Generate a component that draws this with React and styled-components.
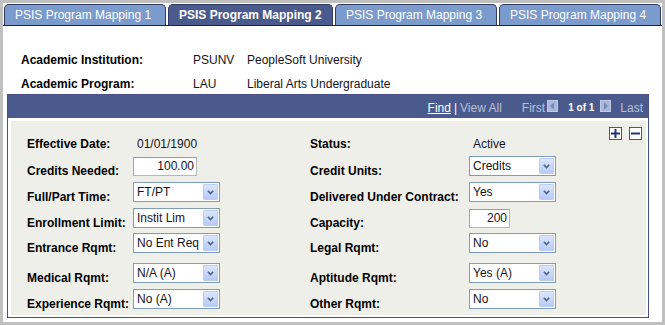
import React from 'react';
import styled, { createGlobalStyle } from 'styled-components';

const GlobalStyle = createGlobalStyle`
  body {
    margin: 0;
    font-family: 'Liberation Sans', Arial, sans-serif;
    font-size: 12px;
    color: #000;
  }
`;

const Frame = styled.div`
  width: 665px;
  height: 325px;
  box-sizing: border-box;
  border: 3px solid #c0c0c0;
  background: #fff;
  overflow: hidden;
`;

const TabBar = styled.div`
  display: flex;
  gap: 2px;
  margin-top: 1px;
  padding-left: 1px;
  border-bottom: 1px solid #1c2340;
`;

const Tab = styled.div`
  box-sizing: border-box;
  width: ${(p) => p.$w}px;
  height: 21px;
  padding-left: 10px;
  line-height: 20px;
  border: 1px solid #2e3a66;
  border-bottom: none;
  border-radius: 5px 5px 0 0;
  background: ${(p) => (p.$active ? '#4b5a8c' : '#7b9bcd')};
  color: #fff;
  font-weight: ${(p) => (p.$active ? 'bold' : 'normal')};
  white-space: nowrap;
`;

const InfoGrid = styled.div`
  display: grid;
  grid-template-columns: 172px 54px 1fr;
  row-gap: 10px;
  margin-top: 27px;
  padding-left: 18px;
  line-height: 14px;
`;

const InfoLabel = styled.div`
  font-weight: bold;
`;

const Value = styled.div`
  color: #141420;
`;

const Panel = styled.div`
  box-sizing: border-box;
  width: 642px;
  margin: 3px 0 0 4px;
  border: 1px solid #474f86;
  background: #fff;
`;

const HeaderBar = styled.div`
  display: flex;
  justify-content: flex-end;
  align-items: center;
  height: 23px;
  padding: 2px 5px 0 0;
  box-sizing: border-box;
  background: #4b5a8c;
  color: #b9c0d6;
  white-space: nowrap;
`;

const NavLink = styled.span`
  color: #fff;
  text-decoration: underline;
`;

const Divider = styled.span`
  color: #fff;
  margin: 0 3px;
`;

const NavText = styled.span`
  margin-left: ${(p) => p.$ml || 0}px;
`;

const Counter = styled.span`
  color: #fff;
  font-weight: bold;
  font-size: 10px;
  margin: 0 6px 0 10px;
`;

const ArrowIcon = styled.svg`
  display: block;
  margin: ${(p) => p.$m};
  position: relative;
  top: -2px;
`;

const Body = styled.div`
  margin: 3px 2px 2px 3px;
  padding: 6px 4px 6px 16px;
  background: #efefea;
`;

const FieldRow = styled.div`
  display: grid;
  grid-template-columns: 106px 177px 159px 1fr auto;
  align-items: start;
  height: ${(p) => p.$h || 20}px;
  margin-top: ${(p) => p.$gap || 0}px;
`;

const Label = styled.div`
  font-weight: bold;
  line-height: 14px;
  padding-top: ${(p) => p.$top || 8}px;
  white-space: nowrap;
`;

const DisplayValue = styled.div`
  color: #141420;
  line-height: 14px;
  padding: ${(p) => p.$top || 0}px 0 0 4px;
`;

const TextInput = styled.div`
  box-sizing: border-box;
  width: ${(p) => p.$w}px;
  height: 19px;
  margin-top: 1px;
  padding-right: 2px;
  border: 1px solid #b8b8b8;
  border-top-color: #9c9c9c;
  border-left-color: #a6a6a6;
  background: #fff;
  line-height: 17px;
  text-align: right;
  color: #141420;
`;

const SelectBox = styled.div`
  box-sizing: border-box;
  display: flex;
  align-items: center;
  width: 87px;
  height: 20px;
  border: 1px solid #7f9db9;
  background: #fff;
  color: #141420;
`;

const SelectText = styled.span`
  flex: 1;
  padding-left: 3px;
  white-space: nowrap;
  overflow: hidden;
`;

const SelectButton = styled.span`
  box-sizing: border-box;
  display: flex;
  align-items: center;
  justify-content: center;
  width: 15px;
  height: 16px;
  margin-right: 1px;
  border: 1px solid #bccdf5;
  border-radius: 1px;
  background: linear-gradient(#dbe6fd, #b7cbf7);
`;

const RowButtons = styled.div`
  display: flex;
  gap: 7px;
`;

const SquareButton = styled.div`
  box-sizing: border-box;
  display: flex;
  align-items: center;
  justify-content: center;
  width: 13px;
  height: 13px;
  border: 1px solid #3c5aa0;
  background: #fff;
`;

const Select = ({ value }) => (
  <SelectBox>
    <SelectText>{value}</SelectText>
    <SelectButton>
      <svg width="7" height="5" viewBox="0 0 7 5">
        <polyline points="0.8,0.8 3.5,3.5 6.2,0.8" fill="none" stroke="#4d6185" strokeWidth="1.6" />
      </svg>
    </SelectButton>
  </SelectBox>
);

const PagerArrow = ({ dir, m }) => (
  <ArrowIcon $m={m} width="11" height="12" viewBox="0 0 11 12">
    <rect x="0" y="0" width="11" height="12" fill="#a8b7d7" />
    <rect x="0.5" y="0.5" width="10" height="11" fill="none" stroke="#bfcbe4" />
    {dir === 'left' ? (
      <polygon points="7,2.5 3,6 7,9.5" fill="#7689b6" />
    ) : (
      <polygon points="4,2.5 8,6 4,9.5" fill="#7689b6" />
    )}
  </ArrowIcon>
);

const tabs = [
  { label: 'PSIS Program Mapping 1', w: 162 },
  { label: 'PSIS Program Mapping 2', w: 165, active: true },
  { label: 'PSIS Program Mapping 3', w: 162 },
  { label: 'PSIS Program Mapping 4', w: 162 },
];

const rows = [
  { gap: 0, left: ['Credits Needed:', { input: '100.00', w: 64 }], right: ['Credit Units:', { select: 'Credits' }] },
  { gap: 6, left: ['Full/Part Time:', { select: 'FT/PT' }], right: ['Delivered Under Contract:', { select: 'Yes' }] },
  { gap: 6, left: ['Enrollment Limit:', { select: 'Instit Lim' }], right: ['Capacity:', { input: '200', w: 41 }] },
  { gap: 5, left: ['Entrance Rqmt:', { select: 'No Ent Req' }], right: ['Legal Rqmt:', { select: 'No' }] },
  { gap: 10, left: ['Medical Rqmt:', { select: 'N/A (A)' }], right: ['Aptitude Rqmt:', { select: 'Yes (A)' }] },
  { gap: 6, left: ['Experience Rqmt:', { select: 'No (A)' }], right: ['Other Rqmt:', { select: 'No' }] },
];

const Field = ({ spec }) =>
  spec.select ? <Select value={spec.select} /> : <TextInput $w={spec.w}>{spec.input}</TextInput>;

const App = () => (
  <>
    <GlobalStyle />
    <Frame>
      <TabBar>
        {tabs.map((t) => (
          <Tab key={t.label} $w={t.w} $active={t.active}>
            {t.label}
          </Tab>
        ))}
      </TabBar>

      <InfoGrid>
        <InfoLabel>Academic Institution:</InfoLabel>
        <Value>PSUNV</Value>
        <Value>PeopleSoft University</Value>
        <InfoLabel>Academic Program:</InfoLabel>
        <Value>LAU</Value>
        <Value>Liberal Arts Undergraduate</Value>
      </InfoGrid>

      <Panel>
        <HeaderBar>
          <NavLink>Find</NavLink>
          <Divider>|</Divider>
          <NavText>View All</NavText>
          <NavText $ml={20}>First</NavText>
          <PagerArrow dir="left" m="0 0 0 2px" />
          <Counter>1 of 1</Counter>
          <PagerArrow dir="right" m="0 9px 0 0" />
          <NavText>Last</NavText>
        </HeaderBar>

        <Body>
          <FieldRow $h={29}>
            <Label $top={10}>Effective Date:</Label>
            <DisplayValue $top={10}>01/01/1900</DisplayValue>
            <Label $top={10}>Status:</Label>
            <DisplayValue $top={10}>Active</DisplayValue>
            <RowButtons>
              <SquareButton>
                <svg width="9" height="9" viewBox="0 0 9 9">
                  <rect x="3.5" y="0" width="2" height="9" fill="#23357a" />
                  <rect x="0" y="3.5" width="9" height="2" fill="#23357a" />
                </svg>
              </SquareButton>
              <SquareButton>
                <svg width="9" height="9" viewBox="0 0 9 9">
                  <rect x="0" y="3.5" width="9" height="2" fill="#23357a" />
                </svg>
              </SquareButton>
            </RowButtons>
          </FieldRow>

          {rows.map((r) => (
            <FieldRow key={r.left[0]} $gap={r.gap}>
              <Label>{r.left[0]}</Label>
              <div>
                <Field spec={r.left[1]} />
              </div>
              <Label>{r.right[0]}</Label>
              <div>
                <Field spec={r.right[1]} />
              </div>
            </FieldRow>
          ))}
        </Body>
      </Panel>
    </Frame>
  </>
);

export default App;
